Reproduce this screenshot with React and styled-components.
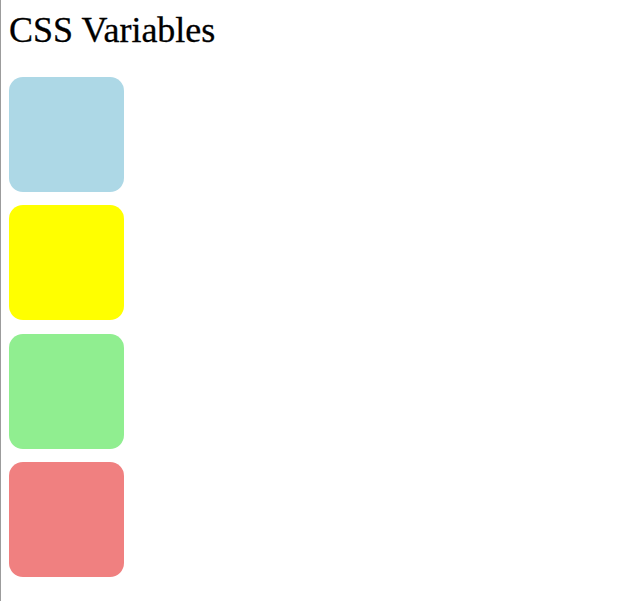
import React from 'react'
import styled, { createGlobalStyle } from 'styled-components'

const GlobalStyle = createGlobalStyle`
  html {
    border-left: 1px solid #9c9c9c;
    min-height: 100%;
  }
  body {
    margin: 8px;
    background: #ffffff;
    font-family: "Liberation Serif", "Times New Roman", serif;
    color: #000000;
  }
`

const Page = styled.div`
  display: flex;
  flex-direction: column;
`

const Title = styled.h1`
  margin: 2px 0 26px;
  font-size: 36px;
  font-weight: normal;
  line-height: 41px;
  -webkit-text-stroke: 0.3px #000000;
`

const BoxList = styled.div`
  display: flex;
  flex-direction: column;
  gap: 13.33px;
`

const Box = styled.div`
  width: 115px;
  height: 115px;
  border-radius: 14px;
  background: ${({ color }) => color};
`

const colors = ['#add8e6', '#ffff00', '#90ee90', '#f08080']

const App = () => (
  <Page>
    <GlobalStyle />
    <Title>CSS Variables</Title>
    <BoxList>
      {colors.map((color) => (
        <Box key={color} color={color} />
      ))}
    </BoxList>
  </Page>
)

export default App
